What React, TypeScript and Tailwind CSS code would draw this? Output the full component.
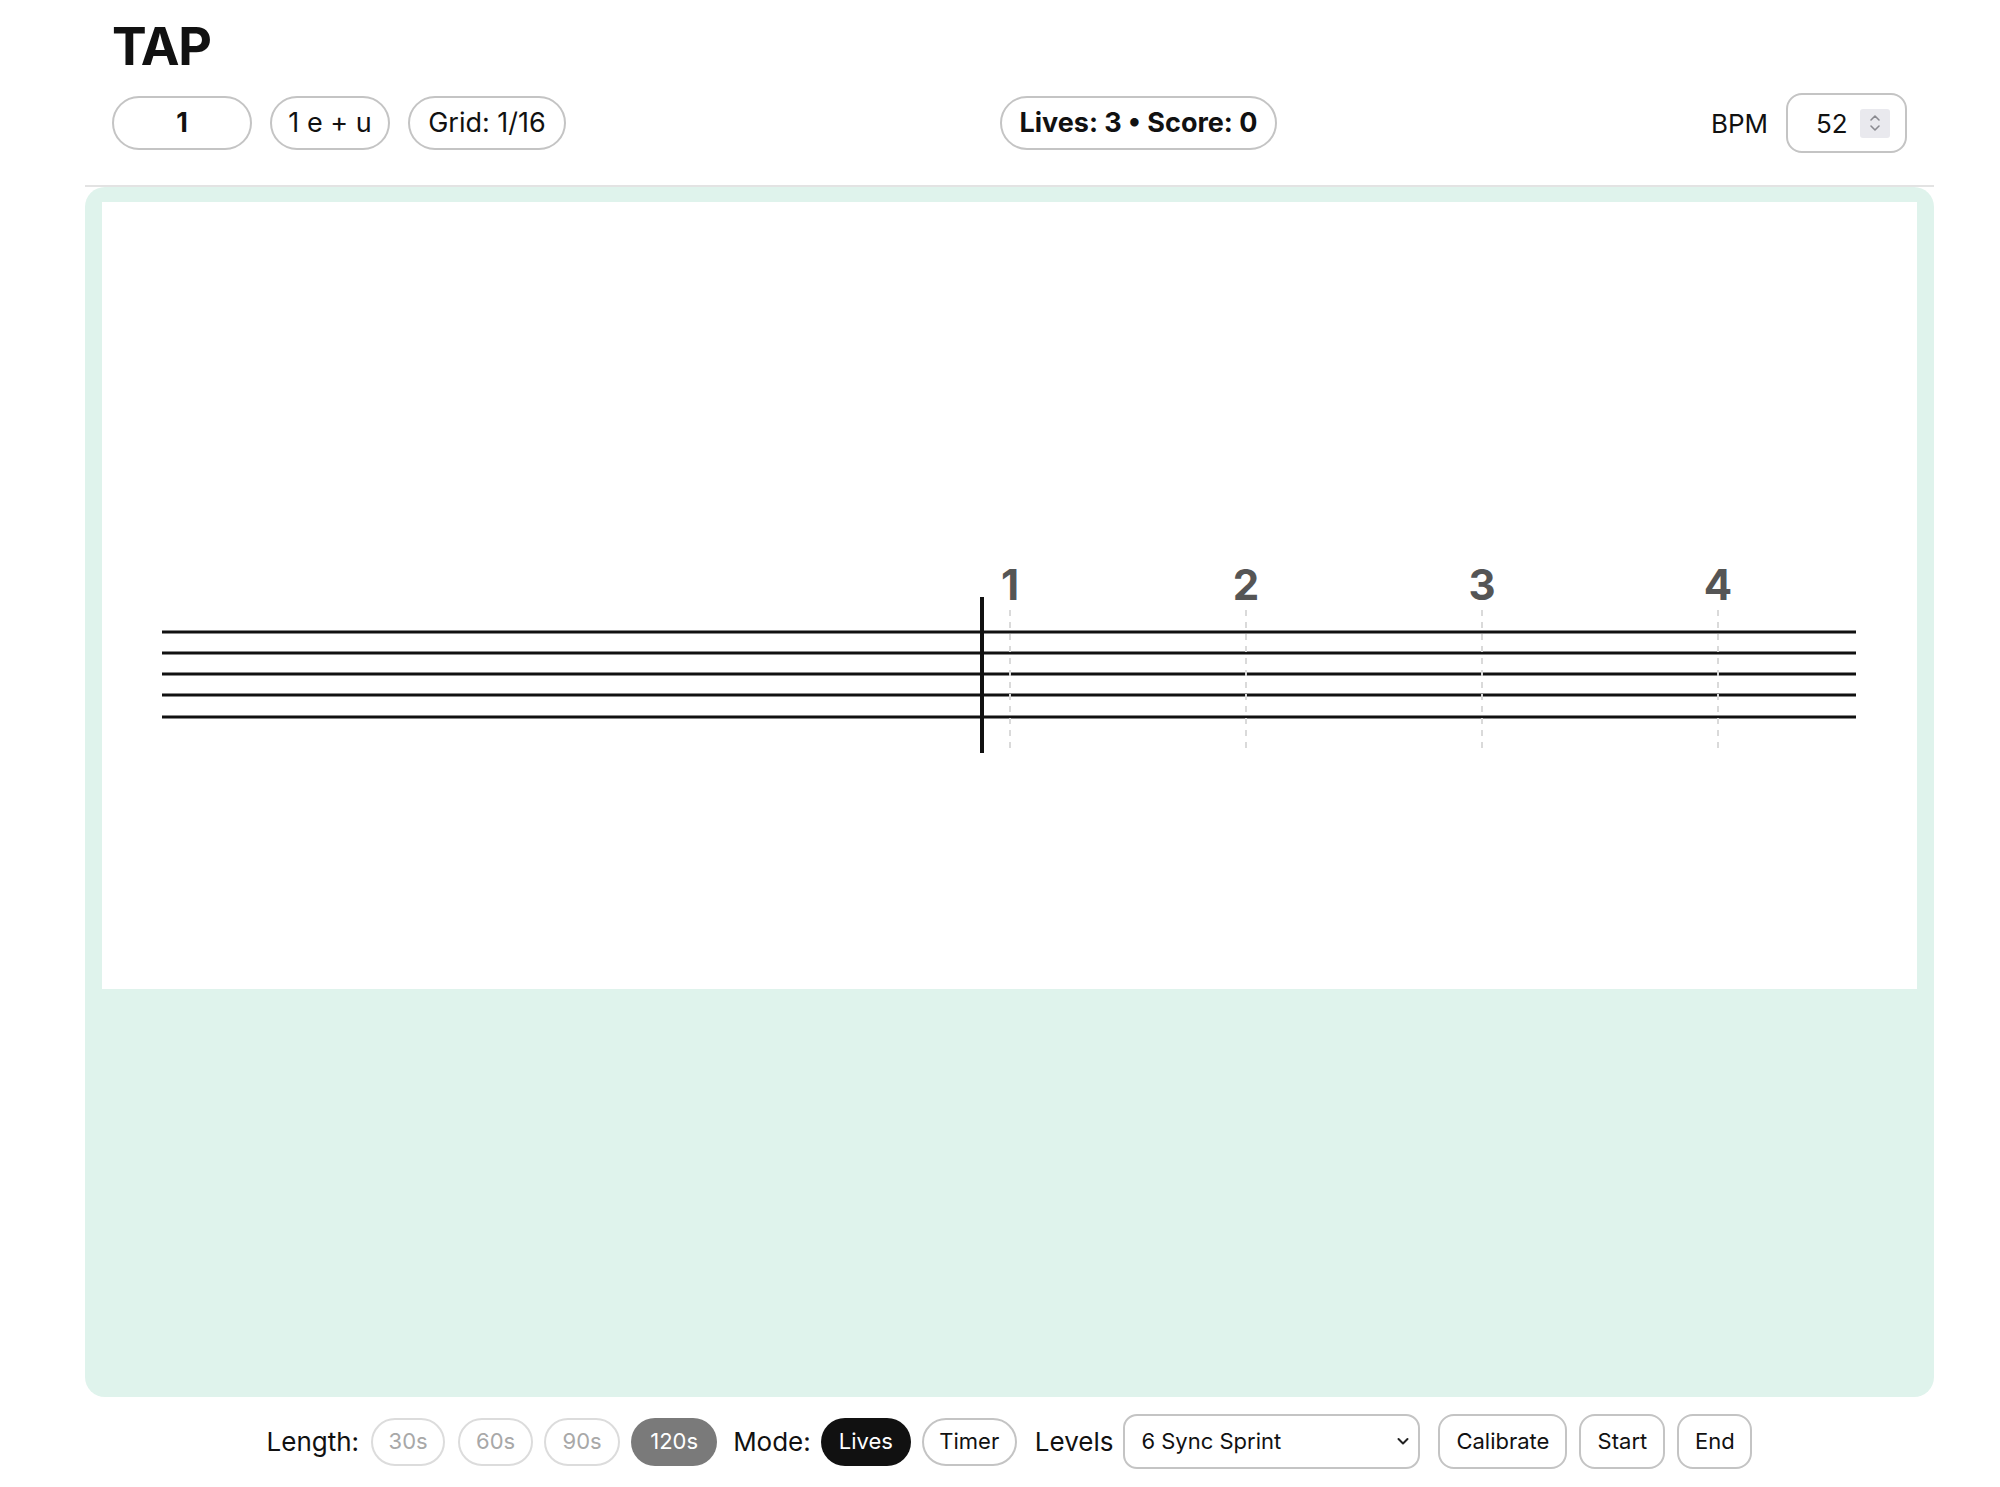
import React from "react";

const beats = [
  { n: "1", x: 908 },
  { n: "2", x: 1144 },
  { n: "3", x: 1380 },
  { n: "4", x: 1616 },
];
const staffY = [430, 451, 472, 493, 515];

function Staff() {
  return (
    <svg width="1815" height="787" viewBox="0 0 1815 787" className="block">
      {staffY.map((y) => (
        <line key={y} x1="60" x2="1754" y1={y} y2={y} stroke="#111" strokeWidth="3" />
      ))}
      <line x1="880" x2="880" y1="395" y2="551" stroke="#111" strokeWidth="4" />
      {beats.map((b) => (
        <g key={b.n}>
          <line
            x1={b.x}
            x2={b.x}
            y1="408"
            y2="548"
            stroke="#dadada"
            strokeWidth="2"
            strokeDasharray="6 6"
          />
          <text
            x={b.x}
            y="398"
            textAnchor="middle"
            fontFamily="Inter, sans-serif"
            fontWeight="700"
            fontSize="42"
            fill="#555"
          >
            {b.n}
          </text>
        </g>
      ))}
    </svg>
  );
}

export default function App() {
  return (
    <div className="w-[2000px] min-h-[1487px] bg-white text-[#111] [font-family:Inter,'Noto_Sans',sans-serif]">
      <div className="ml-[85px] w-[1849px]">
        <div className="px-[27px]">
          <h1 className="pt-[21px] text-[52px] leading-none font-bold tracking-tight">TAP</h1>
          <div className="mt-[20px] h-[60px] flex items-center justify-between">
            <div className="flex items-center gap-[18px]">
              <div className="w-[140px] h-[54px] rounded-full border-2 border-[#c4c4c4] flex items-center justify-center text-[27px] font-bold">
                1
              </div>
              <div className="w-[120px] h-[54px] rounded-full border-2 border-[#c4c4c4] flex items-center justify-center text-[27px]">
                1 e + u
              </div>
              <div className="w-[158px] h-[54px] rounded-full border-2 border-[#c4c4c4] flex items-center justify-center text-[27px]">
                Grid: 1/16
              </div>
            </div>
            <div className="w-[277px] h-[54px] rounded-full border-2 border-[#c4c4c4] flex items-center justify-center text-[27px] font-bold">
              Lives: 3 • Score: 0
            </div>
            <div className="flex items-center gap-[18px]">
              <span className="text-[26px]">BPM</span>
              <div className="w-[121px] h-[60px] rounded-[16px] border-2 border-[#c4c4c4] flex items-center pl-[28px] gap-[12px]">
                <span className="text-[26px]">52</span>
                <div className="w-[30px] h-[29px] bg-[#e9e9ee] rounded-[3px] flex items-center justify-center">
                  <svg width="14" height="22" viewBox="0 0 14 22" fill="none" stroke="#8a8a90" strokeWidth="1.6" strokeLinecap="round" strokeLinejoin="round">
                    <path d="M3 8 L7 4 L11 8" />
                    <path d="M3 14 L7 18 L11 14" />
                  </svg>
                </div>
              </div>
            </div>
          </div>
        </div>
        <div className="mt-[32px] h-[2px] bg-[#e3e3e3]" />
        <div className="h-[1210px] rounded-[20px] bg-[#dff3ec] px-[17px] pt-[15px]">
          <div className="h-[787px] bg-white">
            <Staff />
          </div>
        </div>
        <div className="mt-[17px] flex items-center justify-center">
          <span className="text-[26px]">Length:</span>
          <div className="ml-[12px] w-[74px] h-[48px] rounded-full border-2 border-[#dcdcdc] flex items-center justify-center text-[22px] text-[#a8a8a8]">30s</div>
          <div className="ml-[13px] w-[75px] h-[48px] rounded-full border-2 border-[#dcdcdc] flex items-center justify-center text-[22px] text-[#a8a8a8]">60s</div>
          <div className="ml-[11px] w-[76px] h-[48px] rounded-full border-2 border-[#dcdcdc] flex items-center justify-center text-[22px] text-[#a8a8a8]">90s</div>
          <div className="ml-[11px] w-[86px] h-[48px] rounded-full bg-[#7a7a7a] flex items-center justify-center text-[22px] text-white">120s</div>
          <span className="ml-[16px] text-[26px]">Mode:</span>
          <div className="ml-[10px] w-[90px] h-[48px] rounded-full bg-[#111] flex items-center justify-center text-[22px] text-white">Lives</div>
          <div className="ml-[11px] w-[95px] h-[48px] rounded-full border-2 border-[#c4c4c4] flex items-center justify-center text-[22px]">Timer</div>
          <span className="ml-[18px] text-[26px]">Levels</span>
          <div className="ml-[10px] relative w-[297px] h-[55px]">
            <select className="appearance-none w-full h-full rounded-[14px] border-2 border-[#c4c4c4] bg-white pl-[16px] text-[22px] text-[#111] outline-none">
              <option>6 Sync Sprint</option>
            </select>
            <svg className="absolute right-[10px] top-[20px] pointer-events-none" width="14" height="14" viewBox="0 0 14 14" fill="none" stroke="#222" strokeWidth="2" strokeLinecap="round" strokeLinejoin="round">
              <path d="M2.5 5 L7 9.5 L11.5 5" />
            </svg>
          </div>
          <div className="ml-[18px] w-[129px] h-[55px] rounded-[16px] border-2 border-[#c4c4c4] flex items-center justify-center text-[22px]">Calibrate</div>
          <div className="ml-[12px] w-[86px] h-[55px] rounded-[16px] border-2 border-[#c4c4c4] flex items-center justify-center text-[22px]">Start</div>
          <div className="ml-[12px] w-[75px] h-[55px] rounded-[16px] border-2 border-[#c4c4c4] flex items-center justify-center text-[22px]">End</div>
        </div>
      </div>
    </div>
  );
}
